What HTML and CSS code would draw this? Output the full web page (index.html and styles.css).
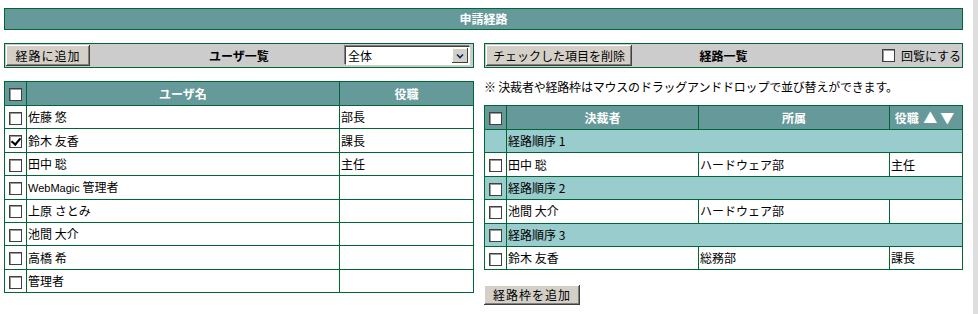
FILE: index.html
```html
<!DOCTYPE html>
<html lang="ja">
<head>
    <meta charset="UTF-8">
    <title>申請経路</title>
    <link rel="stylesheet" href="styles.css">
</head>
<body>
<div class="screen">
    <div class="page">
        <div class="title-bar">申請経路</div>

        <div class="columns">
            <!-- ユーザ一覧 -->
            <div class="col col-left">
                <div class="toolbar">
                    <div class="tb-left"><button class="btn btn-route">経路に追加</button></div>
                    <div class="tb-title">ユーザ一覧</div>
                    <div class="tb-right">
                        <div class="select">
                            <span class="select-text">全体</span>
                            <span class="select-arrow">
                                <svg width="8" height="6" viewBox="0 0 8 6"><path d="M1 1.5 L4 4.5 L7 1.5" fill="none" stroke="#0a246a" stroke-width="1.6"/></svg>
                            </span>
                        </div>
                    </div>
                </div>

                <table class="grid users">
                    <colgroup><col class="c-check"><col class="c-name"><col></colgroup>
                    <tr>
                        <th><input type="checkbox" class="cb"></th>
                        <th>ユーザ名</th>
                        <th>役職</th>
                    </tr>
                    <tr><td class="ck"><input type="checkbox" class="cb"></td><td>佐藤 悠</td><td>部長</td></tr>
                    <tr><td class="ck"><input type="checkbox" class="cb" checked></td><td>鈴木 友香</td><td>課長</td></tr>
                    <tr><td class="ck"><input type="checkbox" class="cb"></td><td>田中 聡</td><td>主任</td></tr>
                    <tr><td class="ck"><input type="checkbox" class="cb"></td><td><span class="latin">WebMagic</span> 管理者</td><td></td></tr>
                    <tr><td class="ck"><input type="checkbox" class="cb"></td><td>上原 さとみ</td><td></td></tr>
                    <tr><td class="ck"><input type="checkbox" class="cb"></td><td>池間 大介</td><td></td></tr>
                    <tr><td class="ck"><input type="checkbox" class="cb"></td><td>高橋 希</td><td></td></tr>
                    <tr><td class="ck"><input type="checkbox" class="cb"></td><td>管理者</td><td></td></tr>
                </table>
            </div>

            <!-- 経路一覧 -->
            <div class="col col-right">
                <div class="toolbar">
                    <div class="tb-left"><button class="btn">チェックした項目を削除</button></div>
                    <div class="tb-title">経路一覧</div>
                    <div class="tb-right">
                        <label class="circulate"><input type="checkbox" class="cb"> 回覧にする</label>
                    </div>
                </div>

                <p class="note">※ 決裁者や経路枠はマウスのドラッグアンドドロップで並び替えができます。</p>

                <table class="grid route">
                    <colgroup><col class="c-check"><col class="c-approver"><col class="c-dept"><col></colgroup>
                    <tr>
                        <th><input type="checkbox" class="cb"></th>
                        <th>決裁者</th>
                        <th>所属</th>
                        <th>役職 <span class="sort">▲▼</span></th>
                    </tr>
                    <tr class="group"><td class="ck"></td><td colspan="3">経路順序 1</td></tr>
                    <tr><td class="ck"><input type="checkbox" class="cb"></td><td>田中 聡</td><td>ハードウェア部</td><td>主任</td></tr>
                    <tr class="group"><td class="ck"><input type="checkbox" class="cb"></td><td colspan="3">経路順序 2</td></tr>
                    <tr><td class="ck"><input type="checkbox" class="cb"></td><td>池間 大介</td><td>ハードウェア部</td><td></td></tr>
                    <tr class="group"><td class="ck"><input type="checkbox" class="cb"></td><td colspan="3">経路順序 3</td></tr>
                    <tr><td class="ck"><input type="checkbox" class="cb"></td><td>鈴木 友香</td><td>総務部</td><td>課長</td></tr>
                </table>

                <button class="btn btn-add">経路枠を追加</button>
            </div>
        </div>
    </div>
    <div class="scrollbar"></div>
</div>
</body>
</html>
```

FILE: styles.css
```css
body {
    margin: 0;
    font-family: "Noto Sans CJK JP", "Liberation Sans", sans-serif;
    font-size: 12px;
    line-height: 14px;
    color: #000;
    background-color: #fff;
}
.screen {
    display: flex;
    justify-content: space-between;
    height: 314px;
    overflow: hidden;
}
.page {
    width: 959px;
    padding: 8px 0 0 4px;
}
.scrollbar {
    width: 5px;
    background-color: #dedede; /* スクロールバー */
}

/* タイトル */
.title-bar {
    height: 20px;
    line-height: 20px;
    border: 1px solid #006633;
    background-color: #669999;
    color: #fff;
    font-weight: bold;
    text-align: center;
}

.columns {
    display: flex;
    gap: 10px;
    margin-top: 13px;
}
.col-left {
    width: 470px;
}
.col-right {
    width: 479px;
}

/* ツールバー */
.toolbar {
    display: grid;
    grid-template-columns: 1fr auto 1fr;
    align-items: center;
    height: 23px;
    border: 1px solid #006633;
    background-color: #cccccc;
}
.tb-left {
    justify-self: start;
    padding-left: 1px;
}
.tb-title {
    font-weight: bold;
}
.tb-right {
    justify-self: end;
    padding-right: 3px;
}

.btn {
    font-family: inherit;
    font-size: 12px;
    line-height: 14px;
    height: 21px;
    padding: 0 7px;
    border: none;
    background-color: #d4d0c8;
    color: #000;
    box-shadow: inset -1px -1px #404040, inset 1px 1px #ffffff, inset -2px -2px #808080;
    cursor: pointer;
}
.btn-route {
    width: 84px;
    letter-spacing: 1px;
}

/* セレクト */
.select {
    display: flex;
    align-items: center;
    width: 121px;
    height: 15px;
    padding: 1px;
    border: 1px solid;
    border-color: #404040 #ffffff #ffffff #404040;
    box-shadow: -1px -1px 0 #808080;
    background-color: #fff;
}
.select-text {
    flex: 1;
    padding-left: 1px;
}
.select-arrow {
    display: flex;
    align-items: center;
    justify-content: center;
    width: 16px;
    height: 15px;
    background-color: #d4d0c8;
    box-shadow: inset -1px -1px #404040, inset 1px 1px #ffffff;
}

.circulate {
    display: flex;
    align-items: center;
    gap: 6px;
}
.col-right .tb-right {
    padding-right: 1px;
}

/* チェックボックス */
.cb {
    appearance: none;
    -webkit-appearance: none;
    position: relative;
    width: 13px;
    height: 13px;
    margin: 0;
    border: 1px solid #404040;
    box-shadow: inset 1px 1px #9a9a9a;
    background-color: #fff;
    vertical-align: middle;
}
.cb:checked::after {
    content: "";
    position: absolute;
    left: 3px;
    top: 0px;
    width: 4px;
    height: 7px;
    border: solid #000;
    border-width: 0 2px 2px 0;
    transform: rotate(40deg);
}

/* 表 */
.grid {
    width: 100%;
    border-collapse: collapse;
    table-layout: fixed;
}
.grid th,
.grid td {
    border: 1px solid #006633;
    padding: 0 1px;
    white-space: nowrap;
    overflow: hidden;
}
.grid th {
    height: 23px;
    background-color: #669999;
    color: #fff;
    font-weight: bold;
    text-align: center;
}
.grid td {
    height: 22.4px;
    text-align: left;
}
.grid td.ck,
.grid th:first-child {
    padding: 0;
    text-align: center;
}
.c-check {
    width: 22px;
}
.c-name {
    width: 313px;
}
.c-approver {
    width: 192px;
}
.c-dept {
    width: 191px;
}
.users {
    margin-top: 13px;
}
.group td {
    background-color: #99cccc;
}
.sort {
    font-size: 14px;
    letter-spacing: 3px;
    padding-left: 2px;
}
.latin {
    font-family: "Liberation Sans", sans-serif;
    font-size: 11px;
}

.note {
    margin: 12px 0 11px 0;
    letter-spacing: -0.2px;
}
.btn-add {
    margin-top: 15px;
    height: 20px;
    width: 96px;
    letter-spacing: 1px;
}
```
